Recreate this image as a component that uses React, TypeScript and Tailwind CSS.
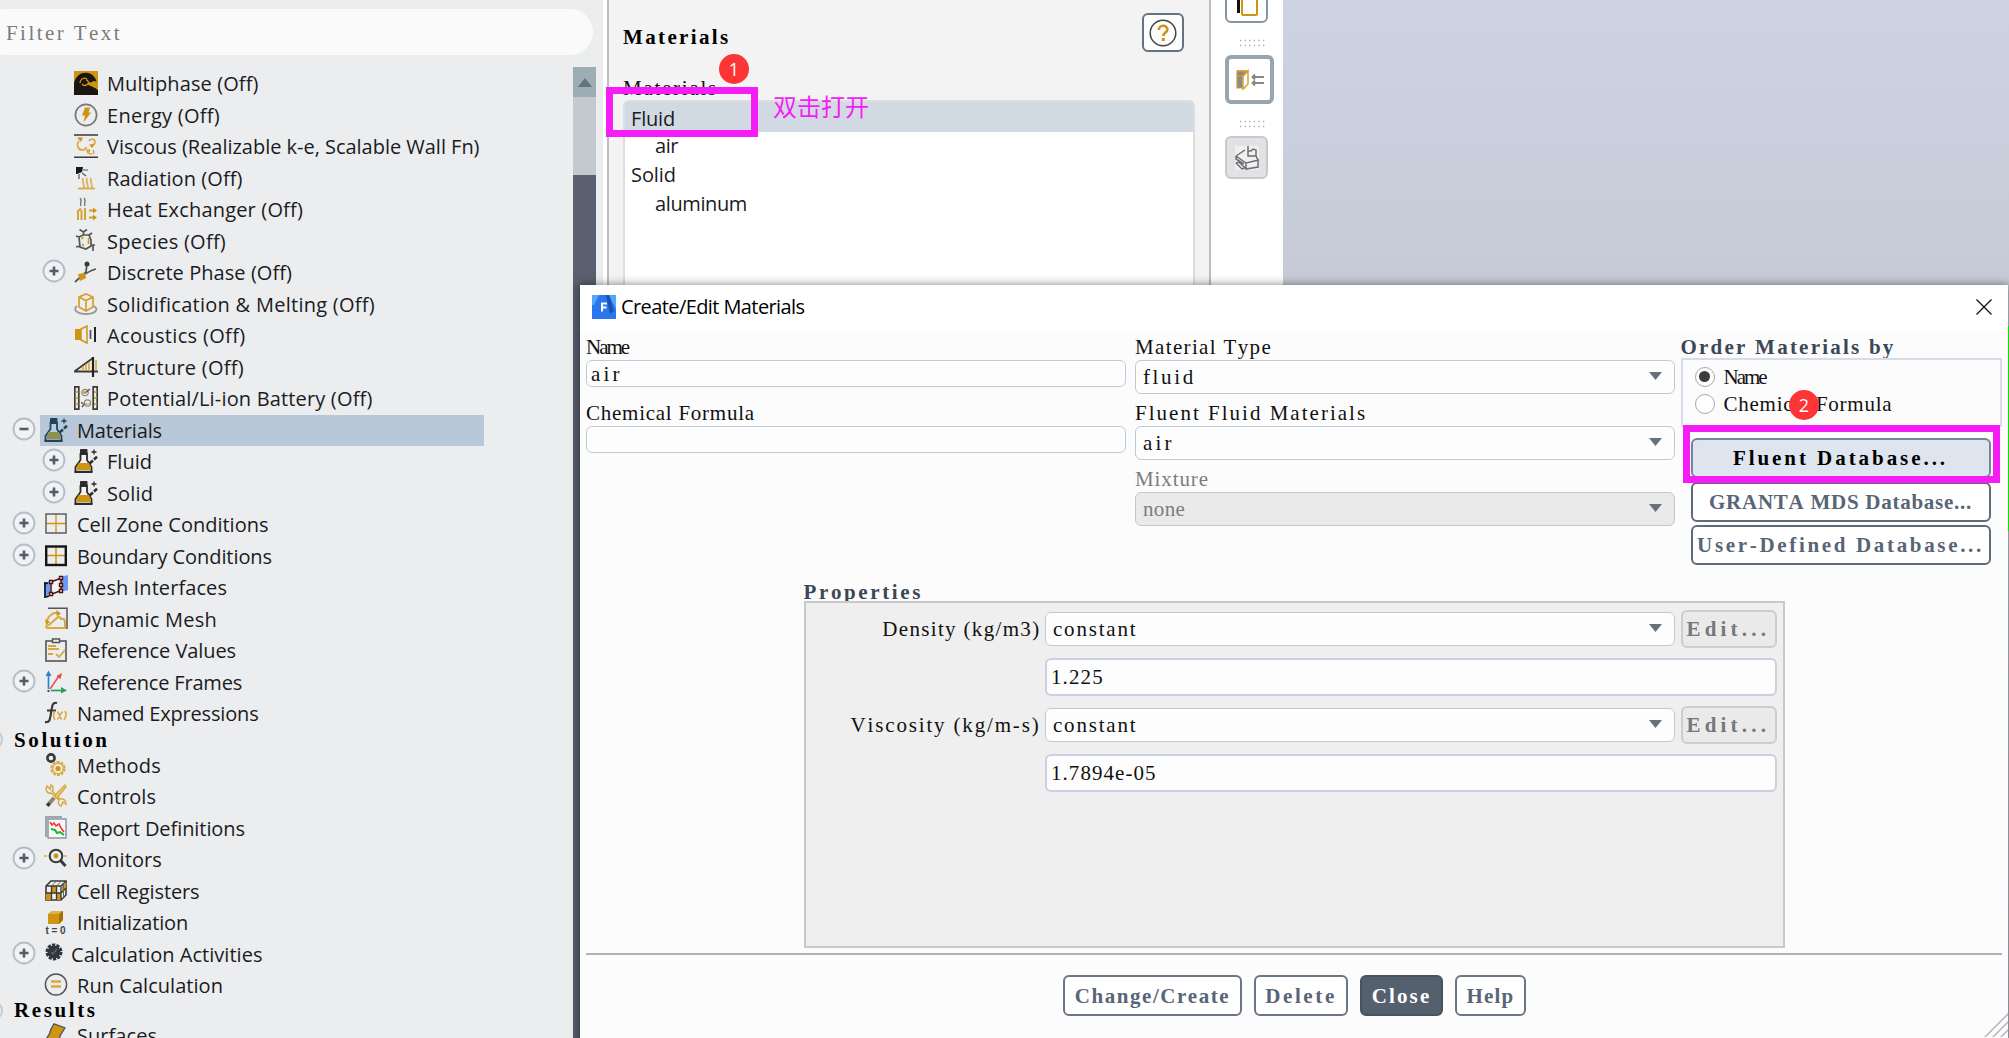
import React, { useLayoutEffect, useState } from "react";

const GOLD = "#cf9512";
const INK = "#3a3a3a";

/* Tracking that makes `text`, set in `font`, exactly `width` px wide. */
function useTracking(text: string, font: string, width: number) {
  const [tracking, setTracking] = useState(0);
  useLayoutEffect(() => {
    const ctx = document.createElement("canvas").getContext("2d");
    if (!ctx || !text.length) return;
    ctx.font = font;
    ctx.fontKerning = "none";
    setTracking((width - ctx.measureText(text).width) / text.length);
  }, [text, font, width]);
  return tracking;
}

/* Fixed-pitch serif text. */
function Typed({ children, bold = false, className = "" }: { children: string; bold?: boolean; className?: string }) {
  const pitch = bold ? 11.95 : 10.55;
  const tracking = useTracking(children, `${bold ? "bold " : ""}21px "Liberation Serif"`, pitch * children.length);
  return (
    <span
      className={`whitespace-pre font-['Liberation_Serif',serif] text-[21px] leading-6 [font-kerning:none] ${bold ? "font-bold" : ""} ${className}`}
      style={{ letterSpacing: `${tracking}px` }}
    >
      {children}
    </span>
  );
}

/* Interface sans text set to a given width. */
function Label({ children, width, className = "" }: { children: string; width: number; className?: string }) {
  const tracking = useTracking(children, `20px "Open Sans"`, width);
  return (
    <span
      className={`font-['Open_Sans',sans-serif] text-[20px] leading-7 whitespace-nowrap [font-kerning:none] ${className}`}
      style={{ letterSpacing: `${tracking}px` }}
    >
      {children}
    </span>
  );
}

function Glyph({ children, size = 24 }: { children: React.ReactNode; size?: number }) {
  return (
    <svg width={size} height={size} viewBox="0 0 24 24" fill="none" className="block shrink-0">
      {children}
    </svg>
  );
}

const flask = (ink: string, liquid: string, glass: string) => (
  <Glyph>
    <path d="M6.500 5v6L1.500 18v5h16v-5L13 11V5z" fill={glass} stroke={ink} strokeWidth="1.800" />
    <path d="M4.500 14h10.500l2 4.500v2.500H2.400v-2.500z" fill={liquid} />
    <path d="M.5 22.700h18" stroke={ink} strokeWidth="1.900" />
    <rect x="6" y="0" width="7.500" height="5" rx="1" fill={ink} />
    <path d="M20 .5v5M17.500 3h5" stroke={ink} strokeWidth="1.300" />
    <path d="M15.500 14.500l3.500-3M20 10.400l3-2.600" stroke={ink} strokeWidth="2.600" />
  </Glyph>
);

const icons: Record<string, React.ReactNode> = {
  multiphase: (
    <Glyph>
      <rect width="24" height="24" fill={GOLD} />
      <path d="M0 24V12C2 4 8 1 14 2c5 1 8 5 8.500 9-2-2-4-1-5 .5-2-.5-3 0-4 1 1 3 5 2 6 4 2 0 3 2 4.500 2.500v5z" fill="#1b1710" />
      <path d="M6 12c0-4 4-6 7-4M8 13c1 2 4 2 6 0 1-2 0-4-2-4" stroke={GOLD} strokeWidth="1.300" />
      <path d="M15 9l4-1" stroke="#1b1710" strokeWidth="2" />
    </Glyph>
  ),
  energy: (
    <Glyph>
      <circle cx="12" cy="12" r="10.600" stroke="#777" strokeWidth="1.700" />
      <path d="M11 4.500h5l-1.500 5H17L9.500 19.500l1.500-7H8z" fill={GOLD} />
    </Glyph>
  ),
  viscous: (
    <Glyph>
      <path d="M0 1h24M0 23.200h24" stroke={INK} strokeWidth="1.400" />
      <path d="M5 7c-3 3-1 9 3 9 2 0 4-1 4.500-3M15 7c1-2.500 6-2.500 6 1 0 2-2 3-4 3M18 20c-4 0-5-2-5-4M19 16c1 1 1 3 0 4" stroke="#dba73a" strokeWidth="1.600" />
      <path d="M3 3.500h6L7 8zM15 10.500h5.500l-2.500 3.500zM12 15.500h4v3z" fill={GOLD} />
    </Glyph>
  ),
  radiation: (
    <Glyph>
      <path d="M2 1h7l-1 5-5 2H2z" fill="#181818" />
      <path d="M9 4h5M8 7l4 3M5 8v5" stroke="#555" strokeWidth="1.200" />
      <path d="M9 12c-1 3 1 5 1 10M13 12c-1 4 1 6 1 10M17 12c-1 3 1 5 1 10" stroke="#dfb563" strokeWidth="1.900" />
      <path d="M4 22.500h17" stroke="#dba73a" strokeWidth="1.700" />
    </Glyph>
  ),
  heat: (
    <Glyph>
      <path d="M6 1c3 3-1 5 1 8M10 1c3 3-1 5 1 8" stroke="#777" strokeWidth="1.400" />
      <path d="M4 23V14l3-2.500M7.500 23V13M11 23V11M15 13.500h6M15 20.500h6" stroke="#d5a02b" strokeWidth="1.900" />
      <path d="M19 10.500l4 3-4 3zM19 17.500l4 3-4 3z" fill={GOLD} />
    </Glyph>
  ),
  species: (
    <Glyph>
      <path d="M5 8l4-2 6 0 2 5 0 6-5 3-6-2zM9.500 6V3L5.500.500M9.500 3L13 .5M5 8L2 7M6 17l-4 1M15 6l3-2M17 16h4M19 16v6" stroke="#555" strokeWidth="1.700" />
      <path d="M7.500 10l2-2M8 15l2 2M14.500 9v6" stroke={GOLD} strokeWidth="1.500" />
    </Glyph>
  ),
  discrete: (
    <Glyph>
      <path d="M1 22L12 12l1-9M7 17c5-4 8-6 15-8" stroke="#555" strokeWidth="1.800" />
      <circle cx="13" cy="4" r="2.500" fill={INK} />
      <path d="M4 14l7-1 1 5-6 3z" fill={GOLD} />
    </Glyph>
  ),
  solid: (
    <Glyph>
      <path d="M3 14c-5 4 1 8 9 8s14-4 8-8" stroke="#999" strokeWidth="1.800" />
      <path d="M5 5l7-3 7 3v10l-7 4-7-4zM5 5l7 3.500L19 5M12 8.500V19" stroke="#d5a02b" strokeWidth="1.700" />
    </Glyph>
  ),
  acoustics: (
    <Glyph>
      <path d="M1 6h6v11H1z" fill={GOLD} />
      <path d="M7 6l6-3v17l-6-3z" stroke={GOLD} strokeWidth="1.500" />
      <path d="M16.500 7v9" stroke="#555" strokeWidth="1.800" />
      <path d="M21 4v15" stroke="#222" strokeWidth="2" />
    </Glyph>
  ),
  structure: (
    <Glyph>
      <path d="M1 16L19 3M0 16.500h24" stroke={INK} strokeWidth="1.800" />
      <path d="M9 11v5M12 9v7M15 7v9M22 5v11" stroke="#d5a02b" strokeWidth="1.500" />
      <path d="M19 2v20" stroke="#222" strokeWidth="2.200" />
    </Glyph>
  ),
  battery: (
    <Glyph>
      <path d="M.8.8h4v22.400h-4zM19.200.8h4v22.400h-4z" stroke={INK} strokeWidth="1.700" />
      <path d="M1.500 6h3M1.500 12h3M1.500 18h3M20 6h3M20 12h3M20 18h3" stroke={GOLD} strokeWidth="1.500" />
      <circle cx="11" cy="6.500" r="3.200" stroke="#888" strokeWidth="1.200" />
      <circle cx="13.500" cy="17" r="3.200" stroke="#888" strokeWidth="1.200" />
      <path d="M11 7l5-4M8 21l3-4M7 17h2" stroke="#555" strokeWidth="1.400" />
      <circle cx="10.500" cy="6.500" r="1.600" fill={GOLD} />
      <path d="M10 18h7" stroke={GOLD} />
    </Glyph>
  ),
  flask: flask("#2c2c2c", GOLD, "#f4f4f4"),
  flaskSel: flask("#20435e", "#8c9152", "#b9cbdc"),
  cell: (
    <Glyph>
      <path d="M12 2v19M2 11.500h20" stroke={GOLD} strokeWidth="1.300" />
      <rect x="2" y="2" width="20" height="19" stroke="#555" strokeWidth="1.400" />
    </Glyph>
  ),
  boundary: (
    <Glyph>
      <path d="M12 2v19M2 11.500h20" stroke={GOLD} strokeWidth="1.500" />
      <rect x="2.200" y="2.500" width="19.600" height="18.500" stroke="#151515" strokeWidth="2.400" />
    </Glyph>
  ),
  meshif: (
    <Glyph>
      <path d="M0 8l6-2v12l-5 5H0zM16 2l8-2v15l-7 2z" fill="#6d98f5" />
      <path d="M7 8l10-5v12L7 20z" fill="#f3f3f3" />
      <path d="M1 7v16M0 9l4-1M2 22l3-1" stroke="#111" strokeWidth="1.600" />
      <path d="M7 7l10-4v12.500L7 19.500z" stroke="#4b1010" strokeWidth="1.500" />
      <path d="M5.500 5.500h3v3h-3zM15.500 1.500h3v3h-3zM15.500 8.500h3v3h-3zM15.500 14.500h3v3h-3zM5.500 17.500h3v3h-3z" fill="#fff" stroke="#4b1010" strokeWidth="1.400" />
    </Glyph>
  ),
  dynamic: (
    <Glyph>
      <path d="M4 1.200h19V22" stroke="#555" strokeWidth="1.500" />
      <path d="M3 14c1-5 6-9 11-8M5 18l9-8c2 0 3 1 3 2h3l1 3v6H4c-3 0-2-3 1-3z" stroke="#d9a840" strokeWidth="2" />
      <path d="M12 3l5 3.500-4 3zM1 12l5 3-4 3z" fill={GOLD} />
    </Glyph>
  ),
  refvalues: (
    <Glyph>
      <rect x="2" y="3" width="20" height="20" stroke="#555" strokeWidth="1.600" />
      <rect x="8.500" y="1" width="7" height="3.500" fill="#eee" stroke="#555" strokeWidth="1.500" />
      <path d="M4 8h8M4 11h11M4 16h5M12 16l3 3 6-7" stroke="#d9a840" strokeWidth="1.800" />
    </Glyph>
  ),
  frames: (
    <Glyph>
      <path d="M4.500 19V5" stroke="#2a86c8" strokeWidth="1.700" />
      <path d="M4.500.5L7.500 6h-6z" fill="#2a86c8" />
      <path d="M6 19L15 6" stroke="#f05555" strokeWidth="1.700" />
      <path d="M18 3l-1.500 6-4-3z" fill="#f04444" />
      <path d="M7 20.500h11" stroke="#1fa45c" strokeWidth="1.700" />
      <path d="M17 17l6 3.500-6 3z" fill="#1fa45c" />
      <path d="M3.500 20h2v2h-2z" fill="#444" />
    </Glyph>
  ),
  fx: (
    <Glyph>
      <path d="M13 2C8 .5 8 6 7 12s-1 10-6 9M3 9.500h9" stroke={INK} strokeWidth="2.200" />
      <path d="M11 10c-2 3-2 6 0 9M21 10c2 3 1 6-1 9M13 11c3 0 2 7 5 7M19 11c-3 0-3 7-6 7" stroke="#d9a840" strokeWidth="1.600" />
    </Glyph>
  ),
  methods: (
    <Glyph>
      <circle cx="7" cy="5" r="3.600" stroke={INK} strokeWidth="2.600" />
      <circle cx="14" cy="15.500" r="6.600" stroke="#d9a840" strokeWidth="2" strokeDasharray="3 1.200" />
      <circle cx="14" cy="15.500" r="5.200" stroke="#d9a840" strokeWidth="1.200" />
      <circle cx="14" cy="15.500" r="2.600" fill={GOLD} />
    </Glyph>
  ),
  controls: (
    <Glyph>
      <path d="M3 2l3 3 1-4c2 1 3 4 1 6l8 8c3-1 6 1 6 5l-3-2-2 4c-3-1-3-4-2-6L7 9C3 10 1 6 3 2z" stroke="#d9a840" strokeWidth="1.500" />
      <path d="M21 1l-9 9-1 4 3-1 8-10z" fill="#e8c67c" stroke="#d9a840" strokeWidth="1.300" />
      <path d="M10 14l-7 8" stroke="#8b8672" strokeWidth="4" />
      <path d="M3.500 21.500l2-2.200" stroke="#333" strokeWidth="3" />
    </Glyph>
  ),
  report: (
    <Glyph>
      <path d="M2 21V1h16" stroke="#9aa6b0" strokeWidth="2" />
      <rect x="4" y="3" width="18" height="19" fill="#f7f7f7" stroke="#8a96a0" strokeWidth="1.500" />
      <path d="M6 6l2 3 2-2 2 3 3-2 2 4 3 4" stroke="#f33" strokeWidth="1.600" />
      <path d="M7 13l4 1 2 3 3-1 4 3" stroke="#1fb53a" strokeWidth="2" />
    </Glyph>
  ),
  monitors: (
    <Glyph>
      <path d="M0 9h3M20 9h3" stroke="#e5bd68" strokeWidth="1.800" />
      <circle cx="12" cy="9" r="6.300" stroke={INK} strokeWidth="2.100" />
      <path d="M16.500 13.500L21.500 19" stroke={INK} strokeWidth="3" />
      <circle cx="12" cy="9" r="2.400" fill={GOLD} />
    </Glyph>
  ),
  registers: (
    <Glyph>
      <path d="M2 7l5-5h15v14l-5 5H2z" fill="#eee" stroke={INK} strokeWidth="1.600" />
      <path d="M8 7h5v7H8zM2 14h6v7H2zM13 14h4v7h-4zM18 6l4-3v7l-4 3z" fill={GOLD} />
      <path d="M2 7h15v14M17 7l5-5M2 14h15l5-5M7.500 7v14M12.500 7v14" stroke={INK} strokeWidth="1.300" />
      <path d="M7.500 7l5-5M12.500 7l5-5M19.500 4.500v14" stroke="#666" strokeWidth="1" />
    </Glyph>
  ),
  init: (
    <Glyph>
      <path d="M4 4l4-3h11v9l-4 4H4z" fill={GOLD} />
      <path d="M4 4l4-3h11l-4 3z" fill="#e2b04a" />
      <path d="M15 4l4-3v9l-4 4z" fill="#a37208" />
      <text x="1.500" y="23.500" fontSize="10" fontWeight="bold" fill="#444" fontFamily="Liberation Sans" textLength="20">t=0</text>
    </Glyph>
  ),
  activities: (
    <svg width="18" height="18" viewBox="0 0 18 18" className="mb-1 block shrink-0">
      <circle cx="9" cy="9" r="6.500" fill="#30363d" />
      <circle cx="9" cy="9" r="7" fill="none" stroke="#30363d" strokeWidth="3" strokeDasharray="3.200 1.200" />
      <path d="M6 9l2 2 4-5" fill="none" stroke="#5a636d" strokeWidth="1.500" />
    </svg>
  ),
  run: (
    <Glyph>
      <circle cx="12" cy="11.500" r="10.600" stroke="#555" strokeWidth="1.500" />
      <path d="M7 8.500h10M7 13.500h10" stroke="#d9a840" strokeWidth="2.400" />
    </Glyph>
  ),
  surfaces: (
    <Glyph>
      <path d="M10 .8l11 4-5 8v12H1V17c3-3 5-6 6-11z" fill={GOLD} stroke="#555" strokeWidth="1.300" />
    </Glyph>
  ),
};

type Row = { label: string; w: number; icon: string; level: 0 | 1; open?: "+" | "-"; selected?: boolean; narrow?: boolean };

const setup: Row[] = [
  { label: "Multiphase (Off)", w: 151.5, icon: "multiphase", level: 1 },
  { label: "Energy (Off)", w: 113, icon: "energy", level: 1 },
  { label: "Viscous (Realizable k-e, Scalable Wall Fn)", w: 372.5, icon: "viscous", level: 1 },
  { label: "Radiation (Off)", w: 135.5, icon: "radiation", level: 1 },
  { label: "Heat Exchanger (Off)", w: 196, icon: "heat", level: 1 },
  { label: "Species (Off)", w: 119, icon: "species", level: 1 },
  { label: "Discrete Phase (Off)", w: 185, icon: "discrete", level: 1, open: "+" },
  { label: "Solidification & Melting (Off)", w: 268, icon: "solid", level: 1 },
  { label: "Acoustics (Off)", w: 138.5, icon: "acoustics", level: 1 },
  { label: "Structure (Off)", w: 137, icon: "structure", level: 1 },
  { label: "Potential/Li-ion Battery (Off)", w: 265.5, icon: "battery", level: 1 },
  { label: "Materials", w: 85, icon: "flaskSel", level: 0, open: "-", selected: true },
  { label: "Fluid", w: 45, icon: "flask", level: 1, open: "+" },
  { label: "Solid", w: 46, icon: "flask", level: 1, open: "+" },
  { label: "Cell Zone Conditions", w: 191.5, icon: "cell", level: 0, open: "+" },
  { label: "Boundary Conditions", w: 195, icon: "boundary", level: 0, open: "+" },
  { label: "Mesh Interfaces", w: 150, icon: "meshif", level: 0 },
  { label: "Dynamic Mesh", w: 140, icon: "dynamic", level: 0 },
  { label: "Reference Values", w: 159, icon: "refvalues", level: 0 },
  { label: "Reference Frames", w: 165, icon: "frames", level: 0, open: "+" },
  { label: "Named Expressions", w: 181.5, icon: "fx", level: 0 },
];

const solution: Row[] = [
  { label: "Methods", w: 84, icon: "methods", level: 0 },
  { label: "Controls", w: 79, icon: "controls", level: 0 },
  { label: "Report Definitions", w: 168, icon: "report", level: 0 },
  { label: "Monitors", w: 85, icon: "monitors", level: 0, open: "+" },
  { label: "Cell Registers", w: 122.5, icon: "registers", level: 0 },
  { label: "Initialization", w: 111, icon: "init", level: 0 },
  { label: "Calculation Activities", w: 191.5, icon: "activities", level: 0, open: "+", narrow: true },
  { label: "Run Calculation", w: 146, icon: "run", level: 0 },
];

const results: Row[] = [{ label: "Surfaces", w: 80, icon: "surfaces", level: 0 }];

function Expander({ sign }: { sign: "+" | "-" }) {
  return (
    <svg width="24" height="24" viewBox="0 0 24 24" className="mb-1 block">
      <circle cx="12" cy="12" r="10.500" fill="#f0f2f3" stroke="#b3bfc7" strokeWidth="1.900" />
      <path d={sign === "+" ? "M7.500 12h9M12 7.500v9" : "M7.500 12h9"} stroke="#545c6c" strokeWidth="2.600" />
    </svg>
  );
}

function TreeRow({ row }: { row: Row }) {
  return (
    <div className={`flex h-[31.5px] shrink-0 items-center ${row.level === 1 ? "pl-[42px]" : "pl-3"}`}>
      <div className="w-7 shrink-0">{row.open && <Expander sign={row.open} />}</div>
      <div className={`flex h-full items-center pl-1 ${row.selected ? "w-[444px] bg-[#b8c8d9]" : ""}`}>
        <div className={row.narrow ? "w-[27px] pl-[1px]" : "w-[33px]"}>
          <div className="pb-0.5">{icons[row.icon]}</div>
        </div>
        <Label width={row.w} className="text-[#1b1b22]">{row.label}</Label>
      </div>
    </div>
  );
}

function Section({ title }: { title: string }) {
  return (
    <div className="flex h-[20.2px] shrink-0 items-center">
      <div className="w-[14px] overflow-hidden">
        <div className="-ml-[18px] size-[21px] rounded-full border-2 border-[#c3cbd0]" />
      </div>
      <Typed bold className="text-black">{title}</Typed>
    </div>
  );
}

function Sidebar() {
  return (
    <aside className="flex h-full w-[603px] shrink-0 flex-col bg-[#ebedef]">
      <div className="mt-[9px] -ml-4 flex h-[46px] w-[609px] shrink-0 items-center rounded-full bg-[#fafafa] pl-[22px]">
        <Typed className="mt-px text-[#7c7c7c]">Filter Text</Typed>
      </div>
      <div className="mt-3 flex min-h-0 flex-1">
        <div className="flex w-[573px] flex-col overflow-hidden pt-[1.300px]">
          {setup.map((r) => <TreeRow key={r.label} row={r} />)}
          <Section title="Solution" />
          {solution.map((r) => <TreeRow key={r.label} row={r} />)}
          <div className="-mt-[2px] shrink-0">
            <Section title="Results" />
          </div>
          {results.map((r) => <TreeRow key={r.label} row={r} />)}
        </div>
        <div className="flex w-[23px] flex-col bg-[#5b6070]">
          <div className="flex h-[30px] items-center justify-center bg-[#9dadb5]">
            <svg width="14" height="9" viewBox="0 0 14 9"><path d="M7 0l7 9H0z" fill="#66717c" /></svg>
          </div>
          <div className="h-[78px] bg-[#c2cad0]" />
        </div>
      </div>
    </aside>
  );
}

const materialRows = [
  { label: "Fluid", w: 44, child: false },
  { label: "air", w: 23, child: true },
  { label: "Solid", w: 45, child: false },
  { label: "aluminum", w: 92, child: true },
];

function MaterialsPanel() {
  return (
    <section className="ml-1 flex w-[604px] shrink-0 border-x-2 border-[#bdbdbd] bg-white">
      <div className="flex w-full flex-col bg-[#f3f3f3] pl-[14px]">
        <div className="mt-[13px] flex h-[39px] items-center justify-between pr-[25px]">
          <Typed bold className="mt-[8px] text-black">Materials</Typed>
          <div className="flex h-[39px] w-[42px] items-center justify-center rounded-md border-2 border-[#66727f] bg-[#fdfdfd]">
            <svg width="28" height="28" viewBox="0 0 28 28" fill="none">
              <circle cx="14" cy="14" r="12.800" stroke="#444" strokeWidth="1.500" />
              <path d="M9.800 11c0-5.500 8.600-5.500 8.600-.5 0 3.200-4 3-4 6.500" stroke={GOLD} strokeWidth="2.600" />
              <path d="M12.800 19h3v3h-3z" fill={GOLD} />
            </svg>
          </div>
        </div>
        <Typed className="mt-[24px] text-[#111]">Materials</Typed>
        <div className="mr-[14px] flex flex-1 flex-col rounded-md border-2 border-[#dedede] bg-white">
          {materialRows.map((r, i) => (
            <div
              key={r.label}
              className={`flex shrink-0 items-center ${i === 0 ? "h-[30px] bg-[#d1d9e3] pt-1" : "h-[28.7px]"} ${r.child ? "pl-[30px]" : "pl-[6px]"}`}
            >
              <Label width={r.w} className="text-[#1b1b22]">{r.label}</Label>
            </div>
          ))}
        </div>
      </div>
    </section>
  );
}

function Grip() {
  return (
    <svg width="26" height="8" viewBox="0 0 26 8" className="ml-[14px] block">
      <path d="M1 1.500h25M1 6.500h25" stroke="#aaa" strokeWidth="1.300" strokeDasharray="1.300 3.300" />
    </svg>
  );
}

function Toolbar() {
  return (
    <div className="flex w-[72px] shrink-0 flex-col bg-white pl-[14px]">
      <div className="-mt-5 flex h-[43px] w-[43px] items-center justify-center rounded-md border-2 border-[#8795a3] bg-white">
        <svg width="24" height="30" viewBox="0 0 24 30" fill="none">
          <path d="M2 0h3v26H2z" fill="#111" />
          <rect x="7" y="4" width="15" height="24" rx="1" stroke={GOLD} strokeWidth="2" />
        </svg>
      </div>
      <div className="mt-4"><Grip /></div>
      <div className="mt-2 flex h-[49px] w-[49px] items-center justify-center rounded-md border-4 border-[#98a5af] bg-white">
        <svg width="30" height="22" viewBox="0 0 30 22" fill="none">
          <path d="M2 2h8v17H2z" fill="#8a8a8a" stroke="#cf9b30" strokeWidth="1.200" />
          <path d="M8 7l5-5v13l-5 5z" fill="#fff" stroke="#d9a840" strokeWidth="1.600" />
          <path d="M2 2h11M2 7h6l5-5" stroke="#cf9b30" strokeWidth="1.300" />
          <path d="M17 8h12M17 14h12M20 5.500L17.500 8l2.500 2.500M20 11.500L17.500 14l2.500 2.500" stroke="#888" strokeWidth="1.900" />
        </svg>
      </div>
      <div className="mt-4"><Grip /></div>
      <div className="mt-2 flex h-[43px] w-[43px] items-center justify-center rounded-md border-2 border-[#c9c9cc] bg-[#e2e2e6]">
        <svg width="26" height="26" viewBox="0 0 26 26" fill="none">
          <rect x="1" y="1" width="24" height="24" fill="#f0f0f0" />
          <path d="M2 11l9-6M2 11l10 7 13-3M14 1v10h8V5l-3-1-2 2h-3M2 11v3l8 5M2 18l6 6 3-1-6-6-3 1M12 18v6l12-2v-7M22 11l2 4" stroke="#6e6e6e" strokeWidth="1.500" />
        </svg>
      </div>
    </div>
  );
}

function Arrow() {
  return (
    <svg width="13" height="8" viewBox="0 0 13 8" className="mb-0.5"><path d="M0 0h13L6.500 8z" fill="#66717d" /></svg>
  );
}

function Select({ value, disabled = false }: { value: string; disabled?: boolean }) {
  return (
    <div className={`flex h-[34px] items-center justify-between rounded-md border-[1.5px] pr-[12px] pl-[7px] ${disabled ? "border-[#c6c6c6] bg-[#eaeaea]" : "border-[#bfcad9] bg-[#fdfdfd]"}`}>
      <Typed className={disabled ? "text-[#7d7d7d]" : "text-[#111]"}>{value}</Typed>
      <Arrow />
    </div>
  );
}

function Field({ label, children, muted = false }: { label: string; children: React.ReactNode; muted?: boolean }) {
  return (
    <div className="flex flex-col">
      <Typed className={`mb-px ${muted ? "text-[#7d7d7d]" : "text-[#111]"}`}>{label}</Typed>
      {children}
    </div>
  );
}

function TextInput({ value }: { value: string }) {
  return (
    <div className="flex h-[27px] items-center rounded-md border-[1.5px] border-[#bfcad9] bg-[#fdfdfd] pl-[4px]">
      <Typed className="text-[#111]">{value}</Typed>
    </div>
  );
}

function Radio({ label, checked = false }: { label: string; checked?: boolean }) {
  return (
    <div className="flex h-[27px] items-center">
      <span className="mr-[9px] flex size-5 items-center justify-center rounded-full border-[1.5px] border-[#a8a8a8] bg-white">
        {checked && <span className="size-[11px] rounded-full bg-[#3d3d3d]" />}
      </span>
      <Typed className="text-[#111]">{label}</Typed>
    </div>
  );
}

function Property({ label, value }: { label: string; value: string }) {
  return (
    <div className="grid grid-cols-[234px_630px_96px] gap-x-[5.5px] gap-y-[10px]">
      <div className="-mr-px flex h-[38px] items-center justify-end"><Typed className="text-[#111]">{label}</Typed></div>
      <div className="flex flex-col justify-center"><Select value="constant" /></div>
      <div className="flex h-[38px] items-center rounded-md border-2 border-[#cdcdcd] bg-[#eaeaea] pl-[4px]">
        <Typed bold className="text-[#777]">Edit...</Typed>
      </div>
      <div className="col-span-2 col-start-2 flex h-[38px] items-center rounded-md border-2 border-[#c9d0de] bg-[#fdfdfd] pl-[4px]">
        <Typed className="text-[#111]">{value}</Typed>
      </div>
    </div>
  );
}

function Dialog() {
  return (
    <div className="absolute top-[285px] left-[580px] flex h-[760px] w-[1428px] flex-col bg-[#fcfcfc] shadow-[0_0_9px_rgba(0,0,0,0.5)]">
      <div className="flex h-[46px] shrink-0 items-center bg-white pr-[16px] pb-[3px] pl-[12px]">
        <svg width="24" height="24" viewBox="0 0 24 24" className="mr-[5px]">
          <rect width="24" height="24" fill="#2b76ee" />
          <path d="M0 0h7L2 10H0zM17 0h7v14z" fill="#55a6f8" />
          <path d="M14 0h3l5 16-4 3z" fill="#1d50b4" />
          <path d="M10 16.500V8.500h5M10 12.500h4.500" fill="none" stroke="#fff" strokeWidth="2" />
        </svg>
        <div className="flex-1"><Label width={183.500} className="text-black">Create/Edit Materials</Label></div>
        <svg width="16" height="16" viewBox="0 0 16 16"><path d="M.5.5l15 15M15.500.5l-15 15" stroke="#111" strokeWidth="1.300" /></svg>
      </div>

      <div className="flex h-[250px] shrink-0 pt-1 pl-[6px]">
        <div className="flex w-[540px] flex-col gap-[14px]">
          <Field label="Name"><TextInput value="air" /></Field>
          <Field label="Chemical Formula"><TextInput value="" /></Field>
        </div>
        <div className="ml-[9px] flex w-[540px] flex-col gap-[7px]">
          <Field label="Material Type"><Select value="fluid" /></Field>
          <Field label="Fluent Fluid Materials"><Select value="air" /></Field>
          <Field label="Mixture" muted><Select value="none" disabled /></Field>
        </div>
        <div className="ml-[5.500px] flex w-[321px] flex-col">
          <Typed bold className="-mb-px text-[#3b4756]">Order Materials by</Typed>
          <div className="h-[69px] border-2 border-[#d6dde9] pt-[3px] pl-[12px]">
            <Radio label="Name" checked />
            <Radio label="Chemical Formula" />
          </div>
          <div className="mt-[11px] ml-[10px] flex w-[300px] flex-col gap-[3.5px]">
            <div className="flex h-10 items-center justify-center rounded-md border-2 border-[#76869a] bg-[#dfe5ee]">
              <Typed bold className="text-black">Fluent Database...</Typed>
            </div>
            <div className="flex h-10 items-center justify-center rounded-md border-2 border-[#5f6b7a] bg-white">
              <Typed bold className="text-[#586576]">GRANTA MDS Database...</Typed>
            </div>
            <div className="flex h-10 items-center justify-center rounded-md border-2 border-[#5f6b7a] bg-white">
              <Typed bold className="text-[#586576]">User-Defined Database...</Typed>
            </div>
          </div>
        </div>
      </div>

      <div className="ml-[223.5px] flex h-[367px] w-[981px] shrink-0 flex-col">
        <Typed bold className="-mt-px -mb-[3px] text-[#3b4756]">Properties</Typed>
        <div className="flex flex-1 flex-col gap-[10px] border-2 border-[#c9c9c9] bg-[#efefef] pt-[7px]">
          <Property label="Density (kg/m3)" value="1.225" />
          <Property label="Viscosity (kg/m-s)" value="1.7894e-05" />
        </div>
      </div>

      <div className="mx-[6px] mt-[5px] h-[2px] shrink-0 bg-[#b2b2b2]" />
      <div className="mt-[20px] ml-[483px] flex gap-[12px]">
        <div className="flex h-[41px] w-[179px] items-center justify-center rounded-md border-2 border-[#6a7585] bg-white"><Typed bold className="text-[#586576]">Change/Create</Typed></div>
        <div className="flex h-[41px] w-[94px] items-center justify-center rounded-md border-2 border-[#6a7585] bg-white"><Typed bold className="text-[#586576]">Delete</Typed></div>
        <div className="flex h-[41px] w-[83px] items-center justify-center rounded-md border-2 border-[#49535f] bg-[#55606e]"><Typed bold className="text-white">Close</Typed></div>
        <div className="flex h-[41px] w-[71px] items-center justify-center rounded-md border-2 border-[#6a7585] bg-white"><Typed bold className="text-[#586576]">Help</Typed></div>
      </div>
      <svg width="24" height="24" viewBox="0 0 24 24" className="absolute top-[728px] right-0">
        <path d="M0 25L25 0M8 25L25 8M16 25l9-9" stroke="#b5b5b5" strokeWidth="1.500" />
      </svg>
    </div>
  );
}

const badge = "absolute flex size-[30px] items-center justify-center rounded-full bg-[#fd3535] font-['Open_Sans',sans-serif] text-[18px] text-white";

export default function App() {
  return (
    <div className="relative h-[1038px] w-[2009px] overflow-hidden bg-white">
      <div className="flex h-full">
        <Sidebar />
        <MaterialsPanel />
        <Toolbar />
        <div className="flex-1 bg-linear-to-b from-[#cdd3e2] to-[#b4b5ba]" />
      </div>
      <div className="absolute top-[285px] left-[573px] h-[753px] w-[7px] bg-[#565d6b]" />
      <Dialog />
      <div className="absolute top-[326px] right-0 h-[205px] w-px bg-[#00e400]" />

      <div className="absolute top-[87px] left-[606px] h-[50px] w-[152px] border-[7px] border-[#f61cf6]" />
      <div className={`${badge} top-[54px] left-[719px]`}>1</div>
      <div className="absolute top-[88px] left-[773px] font-['Noto_Sans_CJK_SC',sans-serif] text-[24px] leading-9 text-[#f61cf6]">双击打开</div>
      <div className="absolute top-[425px] left-[1683px] h-[58px] w-[317px] border-[7px] border-[#f61cf6]" />
      <div className={`${badge} top-[390px] left-[1789px]`}>2</div>
    </div>
  );
}
